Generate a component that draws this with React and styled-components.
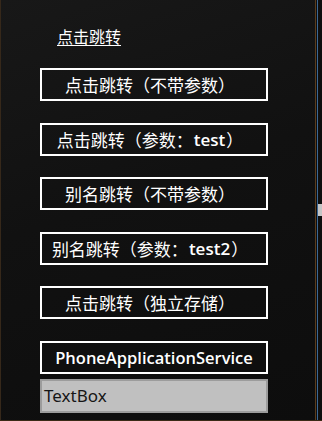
import React from "react"
import styled, { createGlobalStyle } from "styled-components"

const GlobalStyle = createGlobalStyle`
	html, body {
		margin: 0;
		padding: 0;
		background: #0f0f0f;
	}
`

const Frame = styled.div`
	width: 322px;
	height: 421px;
	display: flex;
	box-sizing: border-box;
	border-bottom: 1px solid #3a2a16;
	overflow: hidden;
	font-family: "Noto Sans", "Noto Sans CJK SC", sans-serif;
`

const Content = styled.div`
	width: 316px;
	box-sizing: border-box;
	border-left: 1px solid #36281a;
	border-right: 1px solid #5a3c1c;
	padding: 26px 0 0 39px;
	background: linear-gradient(160deg, #181818 0%, #111111 45%, #0d0d0d 100%);
	display: flex;
	flex-direction: column;
	align-items: flex-start;
`

const Edge = styled.div`
	width: 6px;
	display: flex;
	background: #0e0e0e;
`

const BlueLine = styled.div`
	width: 1px;
	margin-left: 1px;
	background: #3c6894;
`

const ScrollTrack = styled.div`
	flex: 1;
	padding-top: 204px;
`

const Thumb = styled.div`
	height: 12px;
	background: #c4c4c4;
`

const TitleLink = styled.a`
	margin-left: 17px;
	color: #ffffff;
	font-size: 16px;
	line-height: 22px;
	text-decoration: underline;
	text-underline-offset: 2px;
	margin-bottom: 20px;
`

const Button = styled.div`
	width: 228px;
	height: 33px;
	box-sizing: border-box;
	border: 2px solid #ffffff;
	display: flex;
	align-items: center;
	justify-content: center;
	padding-right: ${(p) => (p.$last ? "0" : "8px")};
	color: #ffffff;
	font-size: 17px;
	white-space: nowrap;
	margin-bottom: ${(p) => (p.$last ? "5px" : "21.6px")};
`

const Latin = styled.span`
	font-family: "Open Sans", "Noto Sans", sans-serif;
	font-weight: 600;
	font-size: ${(p) => p.$size || "17px"};
	margin: 0 1px;
`

const TextBox = styled.div`
	width: 228px;
	height: 34px;
	box-sizing: border-box;
	border: 2px solid #9c9c9c;
	background: #c0c0c0;
	color: #161616;
	font-size: 17px;
	display: flex;
	align-items: center;
	padding-left: 2px;
`

const labels = [
	["点击跳转（不带参数）"],
	["点击跳转（参数：", "test", "）"],
	["别名跳转（不带参数）"],
	["别名跳转（参数：", "test2", "）"],
	["点击跳转（独立存储）"],
]

const App = () => (
	<>
		<GlobalStyle />
		<Frame>
			<Content>
				<TitleLink>点击跳转</TitleLink>
				{labels.map(([pre, latin, post]) => (
					<Button key={pre + (latin || "")}>
						{pre}
						{latin && <Latin>{latin}</Latin>}
						{post}
					</Button>
				))}
				<Button $last>
					<Latin $size="16.5px">PhoneApplicationService</Latin>
				</Button>
				<TextBox>TextBox</TextBox>
			</Content>
			<Edge>
				<BlueLine />
				<ScrollTrack>
					<Thumb />
				</ScrollTrack>
			</Edge>
		</Frame>
	</>
)

export default App
